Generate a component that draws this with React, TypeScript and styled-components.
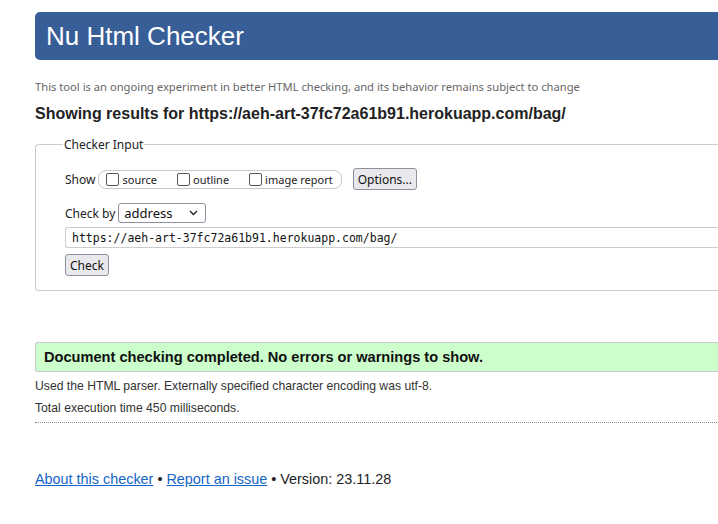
import React from 'react'
import styled, { createGlobalStyle } from 'styled-components'

const Global = createGlobalStyle`
  html, body {
    margin: 0;
    padding: 0;
    overflow: hidden;
    background: #fff;
  }
  body {
    font-family: "Liberation Sans", Arial, sans-serif;
    color: #222;
  }
`

const Page = styled.div`
  width: 760px;
  padding: 12px 0 0 35px;
`

const Header = styled.h1`
  margin: 0;
  height: 48px;
  box-sizing: border-box;
  padding: 9px 0 0 11px;
  background: #375e97;
  color: #fff;
  border-radius: 5px 0 0 5px;
  font-size: 26px;
  font-weight: normal;
  line-height: 30px;
`

const Intro = styled.p`
  margin: 19px 0 0;
  font-family: "Noto Sans", "Open Sans", sans-serif;
  font-size: 11.2px;
  color: #666;
  line-height: 15px;
`

const Results = styled.h2`
  margin: 10px 0 0;
  font-size: 16px;
  font-weight: bold;
  color: #222;
  line-height: 20px;
`

const Fieldset = styled.fieldset`
  margin: 12px 0 0;
  padding: 6px 0 14px 29px;
  border: 1px solid #ccc;
  border-radius: 4px 0 0 4px;
  border-right: none;
  font-family: "Noto Sans", "Open Sans", sans-serif;
  font-size: 12px;
  color: #222;
`

const Legend = styled.legend`
  margin-left: -2px;
  padding: 0 1px;
  font-size: 12px;
`

const Row = styled.div<{ top?: number }>`
  display: flex;
  align-items: center;
  gap: 3px;
  margin-top: ${(p) => p.top ?? 0}px;
`

const Pill = styled.div`
  display: flex;
  align-items: center;
  height: 19px;
  box-sizing: border-box;
  padding: 0 8px 0 7px;
  border: 1px solid #c8c8c8;
  border-radius: 8px;
  gap: 20px;
`

const CheckLabel = styled.label`
  display: flex;
  align-items: center;
  gap: 3px;
  font-size: 11px;
`

const Box = styled.input.attrs({ type: 'checkbox' })`
  appearance: none;
  margin: 0;
  width: 13px;
  height: 13px;
  box-sizing: border-box;
  border: 1px solid #555;
  border-radius: 2px;
  background: #fff;
`

const Button = styled.button<{ ml?: number }>`
  font-family: "Noto Sans", "Open Sans", sans-serif;
  font-size: 12px;
  color: #111;
  height: 22px;
  padding: 0 4px;
  background: #e9e9ed;
  border: 1px solid #8f8f9d;
  border-radius: 3px;
  margin-left: ${(p) => p.ml ?? 0}px;
`

const SelectWrap = styled.div`
  position: relative;
  width: 88px;
  height: 20px;
  svg {
    position: absolute;
    right: 8px;
    top: 7px;
    pointer-events: none;
  }
`

const Select = styled.select`
  appearance: none;
  width: 100%;
  height: 100%;
  box-sizing: border-box;
  padding: 0 0 0 5px;
  border: 1px solid #8f8f9d;
  border-radius: 3px;
  background: #fff;
  font-family: "Noto Sans", "Open Sans", sans-serif;
  font-size: 13px;
  color: #111;
`

const UrlInput = styled.input`
  display: block;
  width: 100%;
  height: 21px;
  box-sizing: border-box;
  margin-top: 4px;
  padding: 0 6px;
  border: 1px solid #ccc;
  border-right: none;
  border-radius: 3px 0 0 3px;
  font-family: "DejaVu Sans Mono", "Liberation Mono", monospace;
  font-size: 11.5px;
  color: #111;
`

const Success = styled.p`
  margin: 51px 0 0;
  height: 30px;
  box-sizing: border-box;
  padding: 6px 0 0 8px;
  background: #ccffcc;
  border: 1px solid #c8c8c8;
  border-right: none;
  border-radius: 3px 0 0 3px;
  font-size: 14.6px;
  font-weight: bold;
  color: #111;
  line-height: 16px;
`

const Info = styled.p<{ top?: number }>`
  margin: ${(p) => p.top ?? 0}px 0 0;
  font-size: 12.2px;
  color: #333;
  line-height: 22px;
`

const Dotted = styled.hr`
  margin: 3px 0 0;
  border: none;
  border-top: 1px dotted #888;
`

const Footer = styled.p`
  margin: 48px 0 0;
  font-size: 14.4px;
  color: #222;
  a {
    color: #1466c6;
  }
`

export default function App() {
  return (
    <Page>
      <Global />
      <Header>Nu Html Checker</Header>
      <Intro>This tool is an ongoing experiment in better HTML checking, and its behavior remains subject to change</Intro>
      <Results>Showing results for https://aeh-art-37fc72a61b91.herokuapp.com/bag/</Results>
      <Fieldset>
        <Legend>Checker Input</Legend>
        <Row top={9}>
          <span>Show</span>
          <Pill>
            <CheckLabel><Box />source</CheckLabel>
            <CheckLabel><Box />outline</CheckLabel>
            <CheckLabel><Box />image report</CheckLabel>
          </Pill>
          <Button ml={8}>Options...</Button>
        </Row>
        <Row top={13}>
          <span>Check by</span>
          <SelectWrap>
            <Select defaultValue="address">
              <option value="address">address</option>
            </Select>
            <svg width="9" height="6" viewBox="0 0 9 6">
              <path d="M1 1l3.5 3.5L8 1" fill="none" stroke="#222" strokeWidth="1.4" />
            </svg>
          </SelectWrap>
        </Row>
        <UrlInput defaultValue="https://aeh-art-37fc72a61b91.herokuapp.com/bag/" />
        <Row top={6}>
          <Button>Check</Button>
        </Row>
      </Fieldset>
      <Success>Document checking completed. No errors or warnings to show.</Success>
      <Info top={3}>Used the HTML parser. Externally specified character encoding was utf-8.</Info>
      <Info>Total execution time 450 milliseconds.</Info>
      <Dotted />
      <Footer>
        <a href="#about">About this checker</a> • <a href="#issue">Report an issue</a> • Version: 23.11.28
      </Footer>
    </Page>
  )
}
